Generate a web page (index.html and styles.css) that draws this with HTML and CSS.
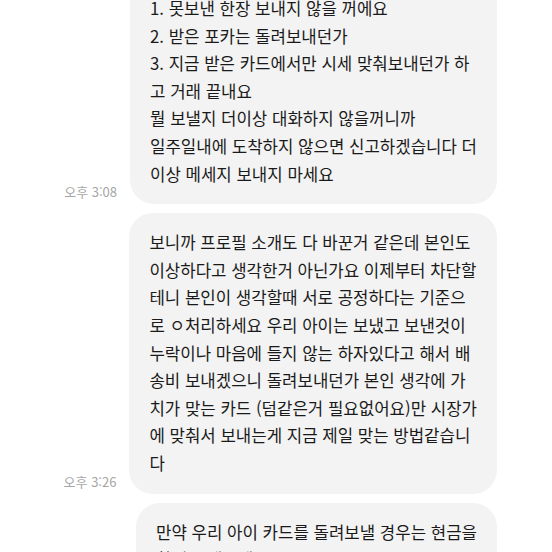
FILE: index.html
```html
<html lang="ko">
<head>
  <meta charset="utf-8">
  <meta name="viewport" content="width=device-width, initial-scale=1.0">
  <title>Chat</title>
  <link rel="stylesheet" href="styles.css">
</head>
<body>
  <div class="chat">
    <div class="row">
      <span class="time">오후 3:08</span>
      <div class="bubble">
        1. 못보낸 한장 보내지 않을 꺼에요<br>
        2. 받은 포카는 돌려보내던가<br>
        3. 지금 받은 카드에서만 시세 맞춰보내던가 하<br>
        고 거래 끝내요<br>
        뭘 보낼지 더이상 대화하지 않을꺼니까<br>
        일주일내에 도착하지 않으면 신고하겠습니다 더<br>
        이상 메세지 보내지 마세요
      </div>
    </div>
    <div class="row">
      <span class="time">오후 3:26</span>
      <div class="bubble">
        보니까 프로필 소개도 다 바꾼거 같은데 본인도<br>
        이상하다고 생각한거 아닌가요 이제부터 차단할<br>
        테니 본인이 생각할때 서로 공정하다는 기준으<br>
        로 ㅇ처리하세요 우리 아이는 보냈고 보낸것이<br>
        누락이나 마음에 들지 않는 하자있다고 해서 배<br>
        송비 보내겠으니 돌려보내던가 본인 생각에 가<br>
        치가 맞는 카드 (덤같은거 필요없어요)만 시장가<br>
        에 맞춰서 보내는게 지금 제일 맞는 방법같습니<br>
        다
      </div>
    </div>
    <div class="row">
      <div class="bubble">
        만약 우리 아이 카드를 돌려보낼 경우는 현금을<br>
        함께 보내주세요
      </div>
    </div>
  </div>
</body>
</html>
```

FILE: styles.css
```css
:root {
  --bubble-bg: #f3f3f3;
  --text-color: #1a1a1a;
  --time-color: #a6a6a6;
}
body {
  margin: 0;
  background-color: #fff;
  color: var(--text-color);
  font-family: "Noto Sans CJK KR", "Noto Sans", sans-serif;
  overflow: hidden;
}
.chat {
  margin-top: -21px;
  padding-right: 55px;
  display: flex;
  flex-direction: column;
  gap: 9px;
}
.row {
  display: flex;
  justify-content: flex-end;
  align-items: flex-end;
  gap: 13px;
}
.time {
  padding-bottom: 3px;
  font-size: 13px;
  color: var(--time-color);
  white-space: nowrap;
}
.bubble {
  border-radius: 24px;
  padding: 16px 20px;
  background-color: var(--bubble-bg);
  font-size: 16.75px;
  line-height: 27.6px;
  white-space: nowrap;
}
```
